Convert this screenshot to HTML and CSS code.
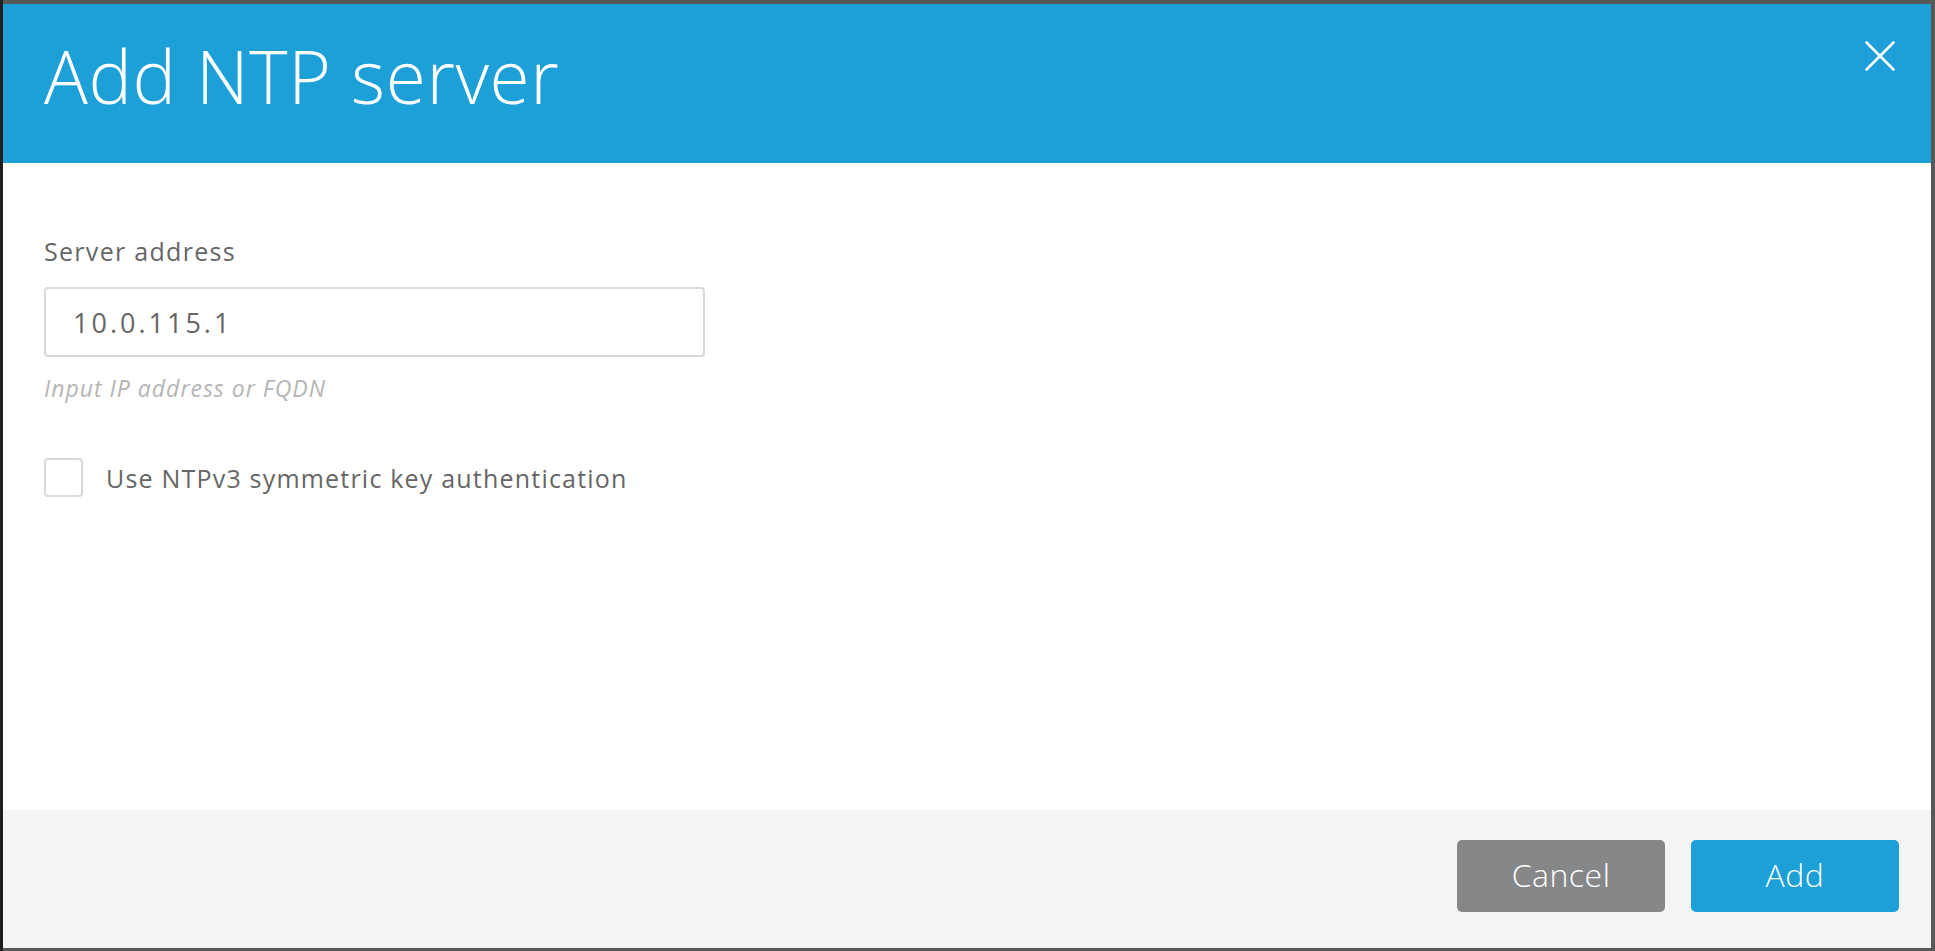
FILE: index.html
```html
<!DOCTYPE html>
<html lang="en">
<head>
    <meta charset="UTF-8">
    <title>Add NTP server</title>
    <link rel="stylesheet" href="styles.css">
</head>
<body>

<div class="modal">
    <div class="modal-header">
        <h1>Add NTP server</h1>
        <button class="close-btn" aria-label="Close">
            <svg width="30" height="30" viewBox="0 0 30 30">
                <path d="M1.5 1.5 L28.5 28.5 M28.5 1.5 L1.5 28.5" stroke="#fff" stroke-width="2.6" stroke-linecap="round" fill="none"/>
            </svg>
        </button>
    </div>

    <div class="modal-body">
        <label class="field-label" for="serverAddress">Server address</label>
        <input type="text" id="serverAddress" class="text-input" value="10.0.115.1">
        <div class="help-text">Input IP address or FQDN</div>

        <label class="checkbox-row">
            <span class="checkbox"></span>
            <span class="checkbox-label">Use NTPv3 symmetric key authentication</span>
        </label>
    </div>

    <div class="modal-footer">
        <button class="btn btn-cancel">Cancel</button>
        <button class="btn btn-primary">Add</button>
    </div>
</div>

</body>
</html>
```

FILE: styles.css
```css
html, body {
    height: 100%;
}

body {
    margin: 0;
    padding: 0;
    font-family: 'Open Sans', sans-serif;
    background: linear-gradient(90deg, #1f1f1f 3px, #585858 3px);
    overflow: hidden;
}

.modal {
    margin: 4px 0 0 3px;
    width: 1928px;
    height: 944px;
    background-color: #fff;
    display: flex;
    flex-direction: column;
}

.modal-header {
    height: 159px;
    flex-shrink: 0;
    background-color: #1ca0d7;
    display: flex;
    justify-content: space-between;
    align-items: flex-start;
    padding: 0 36px 0 41px;
    box-sizing: border-box;
}

.modal-header h1 {
    margin: 36px 0 0;
    font-size: 73px;
    font-weight: 300;
    line-height: 72px;
    letter-spacing: 0.6px;
    color: #fff;
}

.close-btn {
    margin-top: 37px;
    width: 30px;
    height: 30px;
    padding: 0;
    border: none;
    background: none;
    cursor: pointer;
}

.close-btn svg {
    display: block;
}

.modal-body {
    flex: 1;
    padding: 72px 41px 0;
}

.field-label {
    display: block;
    font-size: 25px;
    line-height: 32px;
    letter-spacing: 1.3px;
    color: #666;
}

.text-input {
    display: block;
    margin-top: 20px;
    width: 661px;
    height: 70px;
    box-sizing: border-box;
    padding: 0 27px;
    border: 2px solid #d9d9d9;
    border-radius: 4px;
    font-family: 'Open Sans', sans-serif;
    font-size: 27px;
    letter-spacing: 3px;
    color: #666;
    outline: none;
}

.help-text {
    margin-top: 16px;
    font-size: 23px;
    line-height: 30px;
    letter-spacing: 1px;
    font-style: italic;
    color: #b5b5b5;
}

.checkbox-row {
    display: flex;
    align-items: center;
    gap: 23px;
    margin-top: 55px;
    cursor: pointer;
}

.checkbox {
    width: 39px;
    height: 39px;
    flex-shrink: 0;
    box-sizing: border-box;
    border: 2px solid #d9d9d9;
    border-radius: 4px;
}

.checkbox-label {
    font-size: 25px;
    line-height: 32px;
    letter-spacing: 1.2px;
    color: #666;
}

.modal-footer {
    height: 138px;
    flex-shrink: 0;
    background-color: #f4f4f4;
    display: flex;
    justify-content: flex-end;
    align-items: flex-start;
    gap: 26px;
    padding: 30px 32px 0 0;
    box-sizing: border-box;
}

.btn {
    width: 208px;
    height: 72px;
    border: none;
    border-radius: 5px;
    font-family: 'Open Sans', sans-serif;
    font-size: 32px;
    font-weight: 300;
    letter-spacing: 0.5px;
    color: #fff;
    padding: 0 0 4px;
    cursor: pointer;
}

.btn-cancel {
    background-color: #868789;
}

.btn-primary {
    background-color: #1ca0d7;
}
```
